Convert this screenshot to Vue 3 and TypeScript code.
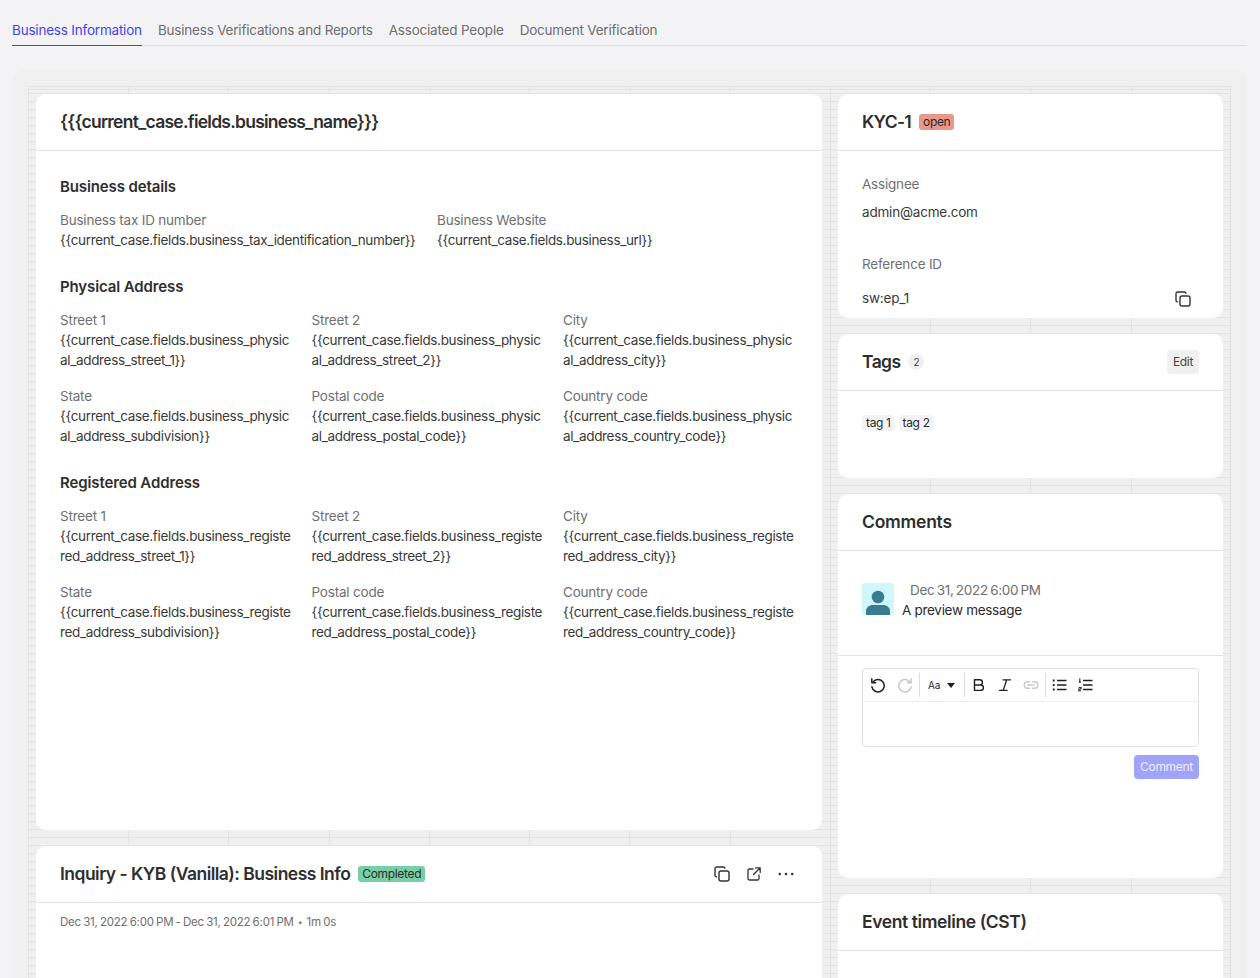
<script setup lang="ts">
interface Field { label: string; value: string }

const businessName = '{{{current_case.fields.business_name}}}'

const details: Field[] = [
  { label: 'Business tax ID number', value: '{{current_case.fields.business_tax_identification_number}}' },
  { label: 'Business Website', value: '{{current_case.fields.business_url}}' },
]

function address(prefix: string): Field[] {
  const p = `{{current_case.fields.business_${prefix}_address_`
  return [
    { label: 'Street 1', value: `${p}street_1}}` },
    { label: 'Street 2', value: `${p}street_2}}` },
    { label: 'City', value: `${p}city}}` },
    { label: 'State', value: `${p}subdivision}}` },
    { label: 'Postal code', value: `${p}postal_code}}` },
    { label: 'Country code', value: `${p}country_code}}` },
  ]
}

const sections = [
  { title: 'Physical Address', fields: address('physical') },
  { title: 'Registered Address', fields: address('registered') },
]

const tabs = ['Business Information', 'Business Verifications and Reports', 'Associated People', 'Document Verification']
</script>

<template>
  <div class="page">
    <nav class="tabs">
      <span v-for="(t, i) in tabs" :key="t" class="tab" :class="{ active: i === 0 }">{{ t }}</span>
    </nav>

    <div class="panel">
      <div class="grid">
        <div class="col left">
          <section class="card business">
            <header class="card-head"><h2 class="name">{{ businessName }}</h2></header>
            <div class="card-body">
              <h3>Business details</h3>
              <div class="details">
                <div v-for="f in details" :key="f.label" class="field">
                  <div class="label">{{ f.label }}</div>
                  <div class="value tpl">{{ f.value }}</div>
                </div>
              </div>
              <template v-for="s in sections" :key="s.title">
                <h3 class="sec">{{ s.title }}</h3>
                <div class="fields">
                  <div v-for="f in s.fields" :key="f.label" class="field">
                    <div class="label">{{ f.label }}</div>
                    <div class="value tpl">{{ f.value }}</div>
                  </div>
                </div>
              </template>
            </div>
          </section>

          <section class="card inquiry">
            <header class="card-head">
              <h2 class="inq">Inquiry - KYB (Vanilla): Business Info</h2>
              <span class="badge green">Completed</span>
              <div class="actions">
                <svg class="ic" viewBox="0 0 16 16" fill="none" stroke="currentColor" stroke-width="1.4" stroke-linecap="round" stroke-linejoin="round"><rect x="5" y="5" width="10" height="10" rx="2"/><path d="M2.600 10.900A1.600 1.600 0 0 1 1 9.400V2.600A1.600 1.600 0 0 1 2.600 1h6.800a1.600 1.600 0 0 1 1.500 1.200"/></svg>
                <svg class="ic" viewBox="0 0 16 16" fill="none" stroke="currentColor" stroke-width="1.3" stroke-linecap="round" stroke-linejoin="round"><path d="M7 3H3.500A1.500 1.500 0 0 0 2 4.500V12.500A1.500 1.500 0 0 0 3.500 14H11.500A1.500 1.500 0 0 0 13 12.500V9"/><path d="M9.500 1.800H14.200V6.500M14 2 7.500 8.500"/></svg>
                <svg class="ic" viewBox="0 0 16 16" fill="currentColor"><circle cx="1.800" cy="8" r="1.300"/><circle cx="8" cy="8" r="1.300"/><circle cx="14.200" cy="8" r="1.300"/></svg>
              </div>
            </header>
            <div class="meta">Dec 31, 2022 6:00 PM - Dec 31, 2022 6:01 PM <span class="dot">•</span> 1m 0s</div>
          </section>
        </div>

        <div class="col right">
          <section class="card kyc">
            <header class="card-head">
              <h2 class="kyc-title">KYC-1</h2>
              <span class="badge red">open</span>
            </header>
            <div class="kyc-body">
              <div class="label">Assignee</div>
              <div class="value kv">admin@acme.com</div>
              <div class="label ref">Reference ID</div>
              <div class="ref-row">
                <span class="value">sw:ep_1</span>
                <svg class="ic copy" viewBox="0 0 16 16" fill="none" stroke="currentColor" stroke-width="1.4" stroke-linecap="round" stroke-linejoin="round"><rect x="5" y="5" width="10" height="10" rx="2"/><path d="M2.600 10.900A1.600 1.600 0 0 1 1 9.400V2.600A1.600 1.600 0 0 1 2.600 1h6.800a1.600 1.600 0 0 1 1.500 1.200"/></svg>
              </div>
            </div>
          </section>

          <section class="card tags">
            <header class="card-head">
              <h2 class="tags-title">Tags</h2>
              <span class="count">2</span>
              <button class="edit" type="button">Edit</button>
            </header>
            <div class="tag-row">
              <span class="tag">tag 1</span>
              <span class="tag">tag 2</span>
            </div>
          </section>

          <section class="card comments">
            <header class="card-head"><h2 class="com-title">Comments</h2></header>
            <div class="comment">
              <svg class="avatar" viewBox="0 0 32 32">
                <rect width="32" height="32" rx="3" fill="#cff7fd"/>
                <circle cx="16" cy="14" r="6.300" fill="#397c8f"/>
                <path d="M4 32v-3.500C4 24.500 7 22 11 22h10c4 0 7 2.500 7 6.500V32z" fill="#397c8f"/>
              </svg>
              <div class="c-text">
                <div class="c-date">Dec 31, 2022 6:00 PM</div>
                <div class="c-msg">A preview message</div>
              </div>
            </div>
            <div class="composer">
              <div class="editor">
                <div class="toolbar">
                  <svg class="t-ic undo" viewBox="0 0 16 16" fill="none" stroke="#1f1f1f" stroke-width="1.500" stroke-linecap="round" stroke-linejoin="round"><path d="M2.700 5.500A6.200 6.200 0 1 1 1.900 9.800"/><path d="M1.800 1.800v3.900h3.900"/></svg>
                  <svg class="t-ic redo" viewBox="0 0 16 16" fill="none" stroke="#c8c8c8" stroke-width="1.500" stroke-linecap="round" stroke-linejoin="round"><path d="M13.300 5.500A6.200 6.200 0 1 0 14.100 9.800"/><path d="M14.200 1.800v3.900h-3.900"/></svg>
                  <i class="sep s1"></i>
                  <span class="aa">Aa</span>
                  <svg class="caret" viewBox="0 0 8 5"><path d="M0 0h8L4 5z" fill="#1f1f1f"/></svg>
                  <i class="sep s2"></i>
                  <svg class="t-ic b" viewBox="0 0 16 16" fill="none" stroke="#1f1f1f" stroke-width="1.400" stroke-linejoin="round"><path d="M3.500 2.800h5.300a2.600 2.600 0 0 1 0 5.200H3.500zM3.500 8h6.200a2.700 2.700 0 0 1 0 5.400H3.500z"/></svg>
                  <svg class="t-ic i" viewBox="0 0 16 16" fill="none" stroke="#1f1f1f" stroke-width="1.300" stroke-linecap="round"><path d="M6 2.800h7.500M2.500 13.400H10M9.700 2.800 6.200 13.400"/></svg>
                  <svg class="t-ic link" viewBox="0 0 16 16" fill="none" stroke="#c8c8c8" stroke-width="1.400" stroke-linecap="round"><path d="M6.500 4.800H4.400a3.200 3.200 0 0 0 0 6.400h2.100M9.500 4.800h2.100a3.200 3.200 0 0 1 0 6.400H9.500M5 8h6"/></svg>
                  <i class="sep s3"></i>
                  <svg class="t-ic ul" viewBox="0 0 16 16" fill="none" stroke="#1f1f1f" stroke-width="1.300"><path d="M5 3.500h9.500M5 8h9.500M5 12.500h9.500"/><path stroke-width="1.800" d="M.8 3.500h1.800M.8 8h1.800M.8 12.500h1.800"/></svg>
                  <svg class="t-ic ol" viewBox="0 0 16 16" fill="none" stroke="#1f1f1f" stroke-width="1.300"><path d="M5 3.500h9.500M5 8h9.500M5 12.500h9.500"/><path stroke-width="1.100" d="M1.800 1.500v3.500M.8 5.200h2.200M.8 10.500h2.200v1.500H.8v1.700h2.200"/></svg>
                </div>
                <div class="editor-area"></div>
              </div>
              <div class="submit-row"><button class="submit" type="button">Comment</button></div>
            </div>
          </section>

          <section class="card timeline">
            <header class="card-head"><h2>Event timeline (CST)</h2></header>
          </section>
        </div>
      </div>
    </div>
  </div>
</template>

<style>
html, body { margin: 0; background: #f3f3f5; }
</style>

<style scoped>
.page {
  box-sizing: border-box;
  height: 978px;
  overflow: hidden;
  background: #f3f3f5;
  padding: 15px 13px 0 12px;
  font-family: Inter, "Noto Sans", sans-serif;
  color: #2b2b2b;
}
.tabs {
  display: flex;
  gap: 16px;
  height: 30px;
  border-bottom: 1px solid #dedee0;
}
.tab {
  font-size: 13.5px;
  line-height: 30px;
  height: 30px;
  color: #6f6f6f;
  letter-spacing: -0.2px;
}
.tab.active {
  color: #3f45f0;
  border-bottom: 1px solid #3f45f0;
}
.panel {
  margin-top: 24px;
  background: #f0f0f0;
  border-radius: 12px 12px 0 0;
  padding: 16px 16px 0;
  height: 920px;
  box-sizing: border-box;
}
.grid {
  box-sizing: border-box;
  width: 1203px;
  height: 900px;
  display: flex;
  gap: 16px;
  padding: 7px 7px 0;
  border-top: 1px solid #e3e3e3;
  border-left: 1px solid #e3e3e3;
  border-right: 1px solid #e3e3e3;
  background-image:
    repeating-linear-gradient(to right, #e3e3e3 0, #e3e3e3 1px, transparent 1px, transparent 100.25px),
    repeating-linear-gradient(to bottom, #e3e3e3 0, #e3e3e3 1px, transparent 1px, transparent 8px);
  background-origin: border-box;
  background-position: 0 0, 0 7px;
}
.col { display: flex; flex-direction: column; gap: 16px; }
.left { width: 786px; }
.right { width: 385px; }
.card { background: #fff; border-radius: 10px; box-sizing: border-box; flex: none; }
.card-head {
  display: flex;
  align-items: center;
  height: 57px;
  box-sizing: border-box;
  padding: 0 24px;
  border-bottom: 1px solid #e2e2e2;
}
h2 { margin: 0; font-size: 17.5px; font-weight: 600; line-height: 24px; letter-spacing: -0.4px; color: #2e2e2e; }
h2.name { letter-spacing: -0.75px; }
h2.inq { letter-spacing: -0.52px; }
h2.kyc-title { letter-spacing: -0.7px; }
h2.tags-title { letter-spacing: -0.6px; }
h2.com-title { letter-spacing: -0.25px; }
h3 { margin: 0; font-size: 15px; font-weight: 600; line-height: 24px; letter-spacing: -0.12px; color: #2e2e2e; }
.business { height: 736px; }
.card-body { padding: 24px 24px 0; }
.details { display: grid; grid-template-columns: 358px 1fr; column-gap: 19px; margin-top: 11px; }
.sec { margin-top: 25px; }
.fields {
  display: grid;
  grid-template-columns: repeat(3, 233.5px);
  column-gap: 18px;
  row-gap: 16px;
  margin-top: 11px;
}
.field { min-width: 0; }
.label { font-size: 13.5px; line-height: 20px; color: #6f6f6f; letter-spacing: -0.2px; }
.value { font-size: 13.5px; line-height: 20px; color: #3a3a3a; overflow-wrap: anywhere; letter-spacing: -0.2px; }
.value.tpl { letter-spacing: -0.34px; }
.badge { margin-left: 8px; height: 16px; border-radius: 3px; padding: 0 4px; font-size: 12px; line-height: 16px; color: #2b2b2b; letter-spacing: -0.33px; }
.badge.red { background: #e8978a; }
.badge.green { background: #76cfa6; }
.inquiry { height: 200px; }
.actions { margin-left: auto; margin-right: 4px; display: flex; gap: 16px; }
.ic { width: 16px; height: 16px; display: block; color: #333; }
.copy { margin-right: 8px; margin-top: 2px; }
.meta { padding: 11px 24px; font-size: 11.5px; line-height: 16px; color: #6f6f6f; letter-spacing: -0.2px; word-spacing: -0.8px; }
.dot { font-size: 8px; margin: 0 2px; vertical-align: 1px; }
.kyc { height: 224px; }
.kyc-body { padding: 23px 24px 0; }
.kv { margin-top: 8px; }
.ref { margin-top: 32px; }
.ref-row { display: flex; justify-content: space-between; align-items: center; margin-top: 14px; height: 20px; }
.tags { height: 144px; }
.count { margin-left: 8px; width: 16px; height: 16px; border-radius: 50%; background: #f0f0f0; font-size: 10px; line-height: 16px; text-align: center; color: #444; }
.edit { margin-left: auto; border: 0; background: #f0f0f0; border-radius: 4px; width: 32px; height: 24px; padding: 0; font: 12px/24px Inter, sans-serif; letter-spacing: -0.3px; color: #444; }
.tag-row { display: flex; gap: 4px; padding: 24px 24px 0; }
.tag { background: #f3f3f5; border-radius: 3px; padding: 0 4px; font-size: 12px; line-height: 16px; color: #2b2b2b; letter-spacing: -0.35px; }
.comments { height: 384px; }
.comment { display: flex; gap: 8px; padding: 32px 24px 0; height: 105px; box-sizing: border-box; border-bottom: 1px solid #e2e2e2; }
.avatar { width: 32px; height: 32px; flex: none; }
.c-text { margin-top: -3px; }
.c-date { font-size: 13.5px; line-height: 20px; color: #6f6f6f; margin-left: 8px; letter-spacing: -0.3px; word-spacing: -1.2px; }
.c-msg { font-size: 13.5px; line-height: 20px; color: #2b2b2b; letter-spacing: -0.3px; }
.composer { padding: 12px 24px 0; }
.editor { border: 1px solid #e0e0e0; border-radius: 4px; height: 79px; box-sizing: border-box; }
.toolbar { height: 32px; border-bottom: 1px solid #ececec; display: flex; align-items: center; padding-left: 7px; }
.t-ic { width: 16px; height: 16px; flex: none; }
.redo { margin-left: 11px; }
.sep { width: 1px; height: 24px; background: #dcdcdc; flex: none; }
.s1 { margin: 0 8px 0 6px; }
.aa { font-size: 10px; color: #1f1f1f; width: 14px; letter-spacing: -0.2px; }
.caret { width: 8px; height: 5px; margin-left: 5px; }
.s2 { margin: 0 6px 0 9px; }
.i { margin-left: 10px; }
.link { margin-left: 10px; }
.s3 { margin: 0 6px 0 6px; }
.ol { margin-left: 10px; }
.submit-row { display: flex; justify-content: flex-end; margin-top: 8px; }
.submit { border: 0; border-radius: 4px; background: #a0a3f7; color: #eef; height: 24px; width: 65px; padding: 0; font: 12px/24px Inter, sans-serif; letter-spacing: -0.3px; }
.timeline { height: 200px; }
</style>
